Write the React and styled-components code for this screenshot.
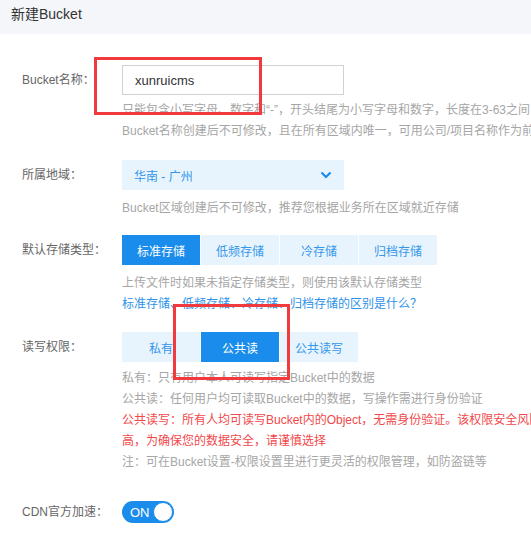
import React, { useState } from 'react';
import styled, { createGlobalStyle } from 'styled-components';

const GlobalStyle = createGlobalStyle`
  body {
    margin: 0;
    background: #fff;
    font-family: "Liberation Sans", "Noto Sans CJK SC", sans-serif;
    overflow: hidden;
  }
`;

const Page = styled.div`
  position: relative;
  width: 531px;
  height: 534px;
  overflow: hidden;
`;

const Header = styled.div`
  height: 34px;
  line-height: 29px;
  padding-left: 11px;
  background: #f5f6fa;
  color: #333;
  font-size: 14px;
`;

const Form = styled.div`
  padding-top: 31px;
  padding-left: 22px;
`;

const Row = styled.div`
  display: flex;
  align-items: flex-start;
  margin-top: ${(p) => p.gap || 0}px;
`;

const Label = styled.div`
  width: 100px;
  flex-shrink: 0;
  height: 30px;
  line-height: 30px;
  font-size: 12px;
  color: #666;
  white-space: nowrap;
`;

const Field = styled.div`
  display: flex;
  flex-direction: column;
  align-items: flex-start;
`;

const Input = styled.input`
  box-sizing: border-box;
  width: 222px;
  height: 30px;
  border: 1px solid #d2d2d2;
  padding: 0 12px;
  font-family: inherit;
  font-size: 13px;
  color: #333;
  outline: none;
`;

const Select = styled.div`
  box-sizing: border-box;
  width: 222px;
  height: 30px;
  display: flex;
  align-items: center;
  justify-content: space-between;
  padding: 0 12px;
  background: #e8f4fd;
  color: #2e95ea;
  font-size: 12px;
`;

const Tabs = styled.div`
  display: flex;
  gap: 1px;
`;

const Tab = styled.button`
  width: 78px;
  height: 30px;
  border: 0;
  padding: 0;
  font-family: inherit;
  font-size: 12px;
  background: ${(p) => (p.active ? '#1a8ceb' : '#e8f4fd')};
  color: ${(p) => (p.active ? '#fff' : '#3597ea')};
  cursor: pointer;
`;

const Help = styled.div`
  margin-top: ${(p) => p.top || 0}px;
  font-size: 12px;
  line-height: 21px;
  white-space: nowrap;
  color: #a6a6a6;
`;

const Line = styled.div`
  color: ${(p) => (p.tone === 'red' ? '#f2484b' : p.tone === 'link' ? '#2d93e9' : 'inherit')};
`;

const Toggle = styled.button`
  position: relative;
  box-sizing: border-box;
  width: 52px;
  height: 22px;
  margin-top: 4px;
  border: 0;
  border-radius: 11px;
  background: #1a8ceb;
  color: #fff;
  font-family: inherit;
  font-size: 13px;
  text-align: left;
  padding: 0 0 0 8px;
  cursor: pointer;
`;

const Knob = styled.span`
  position: absolute;
  right: 1px;
  top: 1px;
  width: 20px;
  height: 20px;
  box-sizing: border-box;
  border-radius: 50%;
  background: #fff;
  border: 1px solid #1a8ceb;
`;

// red annotation boxes drawn over the form
const Mark = styled.div`
  position: absolute;
  box-sizing: border-box;
  border: 3px solid #f03a3d;
  left: ${(p) => p.x}px;
  top: ${(p) => p.y}px;
  width: ${(p) => p.w}px;
  height: ${(p) => p.h}px;
  pointer-events: none;
`;

const Chevron = () => (
  <svg width="12" height="8" viewBox="0 0 12 8">
    <path d="M1.5 1.5 L6 6 L10.5 1.5" fill="none" stroke="#1a8ceb" strokeWidth="2.2" />
  </svg>
);

const storageTypes = ['标准存储', '低频存储', '冷存储', '归档存储'];
const perms = ['私有', '公共读', '公共读写'];

export default function App() {
  const [storage, setStorage] = useState(0);
  const [perm, setPerm] = useState(1);
  const [cdn, setCdn] = useState(true);

  return (
    <Page>
      <GlobalStyle />
      <Header>新建Bucket</Header>
      <Form>
        <Row>
          <Label>Bucket名称：</Label>
          <Field>
            <Input defaultValue="xunruicms" />
            <Help top={5}>
              <Line>只能包含小写字母、数字和“-”，开头结尾为小写字母和数字，长度在3-63之间</Line>
              <Line>Bucket名称创建后不可修改，且在所有区域内唯一，可用公司/项目名称作为前缀</Line>
            </Help>
          </Field>
        </Row>
        <Row gap={18}>
          <Label>所属地域：</Label>
          <Field>
            <Select>
              <span>华南 - 广州</span>
              <Chevron />
            </Select>
            <Help top={8}>
              <Line>Bucket区域创建后不可修改，推荐您根据业务所在区域就近存储</Line>
            </Help>
          </Field>
        </Row>
        <Row gap={16}>
          <Label>默认存储类型：</Label>
          <Field>
            <Tabs>
              {storageTypes.map((t, i) => (
                <Tab key={t} active={i === storage} onClick={() => setStorage(i)}>
                  {t}
                </Tab>
              ))}
            </Tabs>
            <Help top={8}>
              <Line>上传文件时如果未指定存储类型，则使用该默认存储类型</Line>
              <Line tone="link">标准存储、低频存储、冷存储、归档存储的区别是什么？</Line>
            </Help>
          </Field>
        </Row>
        <Row gap={17}>
          <Label>读写权限：</Label>
          <Field>
            <Tabs>
              {perms.map((t, i) => (
                <Tab key={t} active={i === perm} onClick={() => setPerm(i)}>
                  {t}
                </Tab>
              ))}
            </Tabs>
            <Help top={6}>
              <Line>私有：只有用户本人可读写指定Bucket中的数据</Line>
              <Line>公共读：任何用户均可读取Bucket中的数据，写操作需进行身份验证</Line>
              <Line tone="red">公共读写：所有人均可读写Bucket内的Object，无需身份验证。该权限安全风险较</Line>
              <Line tone="red">高，为确保您的数据安全，请谨慎选择</Line>
              <Line>注：可在Bucket设置-权限设置里进行更灵活的权限管理，如防盗链等</Line>
            </Help>
          </Field>
        </Row>
        <Row gap={24}>
          <Label>CDN官方加速：</Label>
          <Field>
            <Toggle onClick={() => setCdn((v) => !v)}>
              {cdn ? 'ON' : 'OFF'}
              <Knob />
            </Toggle>
          </Field>
        </Row>
      </Form>
      <Mark x={94} y={57} w={168} h={58} />
      <Mark x={173} y={304} w={117} h={76} />
    </Page>
  );
}
